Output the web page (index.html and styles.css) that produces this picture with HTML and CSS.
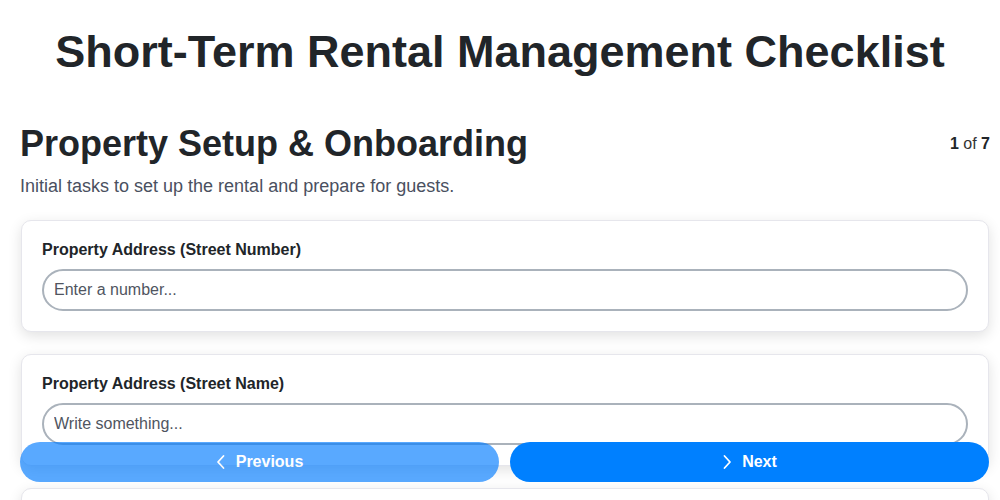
FILE: index.html
```html
<!DOCTYPE html>
<html lang="en">
<head>
<meta charset="utf-8">
<title>Short-Term Rental Management Checklist</title>
<link rel="stylesheet" href="styles.css">
</head>
<body>
  <h1 class="page-title">Short-Term Rental Management Checklist</h1>
  <main class="section">
    <div class="section-head">
      <h2 class="section-title">Property Setup &amp; Onboarding</h2>
      <div class="progress"><strong>1</strong> of <strong>7</strong></div>
    </div>
    <p class="section-desc">Initial tasks to set up the rental and prepare for guests.</p>

    <div class="card">
      <label class="field-label">Property Address (Street Number)</label>
      <input class="field-input" type="text" placeholder="Enter a number...">
    </div>
    <div class="card">
      <label class="field-label">Property Address (Street Name)</label>
      <input class="field-input" type="text" placeholder="Write something...">
    </div>
    <div class="card">
      <label class="field-label">Property Address (City)</label>
      <input class="field-input" type="text" placeholder="Write something...">
    </div>
  </main>

  <nav class="nav-bar">
    <button class="nav-btn nav-btn-prev" disabled>
      <svg class="chev" width="10" height="16" viewBox="0 0 10 16" fill="none" stroke="currentColor" stroke-width="1.8" stroke-linecap="round" stroke-linejoin="round"><path d="M7.5 2 L2 8 L7.5 14"/></svg>
      <span>Previous</span>
    </button>
    <button class="nav-btn nav-btn-next">
      <svg class="chev" width="10" height="16" viewBox="0 0 10 16" fill="none" stroke="currentColor" stroke-width="1.8" stroke-linecap="round" stroke-linejoin="round"><path d="M2.5 2 L8 8 L2.5 14"/></svg>
      <span>Next</span>
    </button>
  </nav>
</body>
</html>
```

FILE: styles.css
```css
html::-webkit-scrollbar { display: none; }
html { scrollbar-width: none; }

body {
  margin: 0;
  font-family: "Liberation Sans", Arial, sans-serif;
  color: #212529;
  background: #ffffff;
}

.page-title {
  margin: 24px 0 0;
  text-align: center;
  font-size: 45px;
  line-height: 55px;
  font-weight: 700;
  color: #212529;
}

.section {
  padding: 43px 10px 120px 20px;
}

.section-head {
  display: flex;
  justify-content: space-between;
  align-items: center;
}

.section-title {
  margin: 0;
  font-size: 36px;
  line-height: 44px;
  font-weight: 700;
  color: #212529;
}

.progress {
  font-size: 16px;
  color: #333;
}
.progress strong { color: #212529; }

.section-desc {
  margin: 10px 0 23px;
  font-size: 18px;
  line-height: 21px;
  color: #4a5060;
}

.card {
  background: #fff;
  border: 1px solid #e6e6ec;
  border-radius: 10px;
  padding: 20px;
  margin: 0 1px 22px;
  box-shadow: 0 4px 14px rgba(0, 0, 0, 0.12);
}

.field-label {
  display: block;
  font-size: 16px;
  line-height: 18px;
  font-weight: 700;
  color: #212529;
  margin-bottom: 10px;
}

.field-input {
  display: block;
  box-sizing: border-box;
  width: 100%;
  height: 42px;
  padding: 0 10px;
  border: 2px solid #aab2bb;
  border-radius: 21px;
  font-family: inherit;
  font-size: 16px;
  color: #212529;
  background: #fff;
  outline: none;
}
.field-input::placeholder { color: #50555f; opacity: 1; }

.nav-bar {
  position: fixed;
  left: 20px;
  right: 11px;
  bottom: 18px;
  display: flex;
  gap: 11px;
}

.nav-btn {
  flex: 1;
  height: 40px;
  border: none;
  border-radius: 20px;
  background: #007bff;
  color: #fff;
  font-family: inherit;
  font-size: 16px;
  font-weight: 700;
  display: flex;
  align-items: center;
  justify-content: center;
  gap: 10px;
  cursor: pointer;
}

.nav-btn-next { background: #0080ff; }
.nav-btn-prev { opacity: 0.65; cursor: default; }

.chev { display: block; }
```
